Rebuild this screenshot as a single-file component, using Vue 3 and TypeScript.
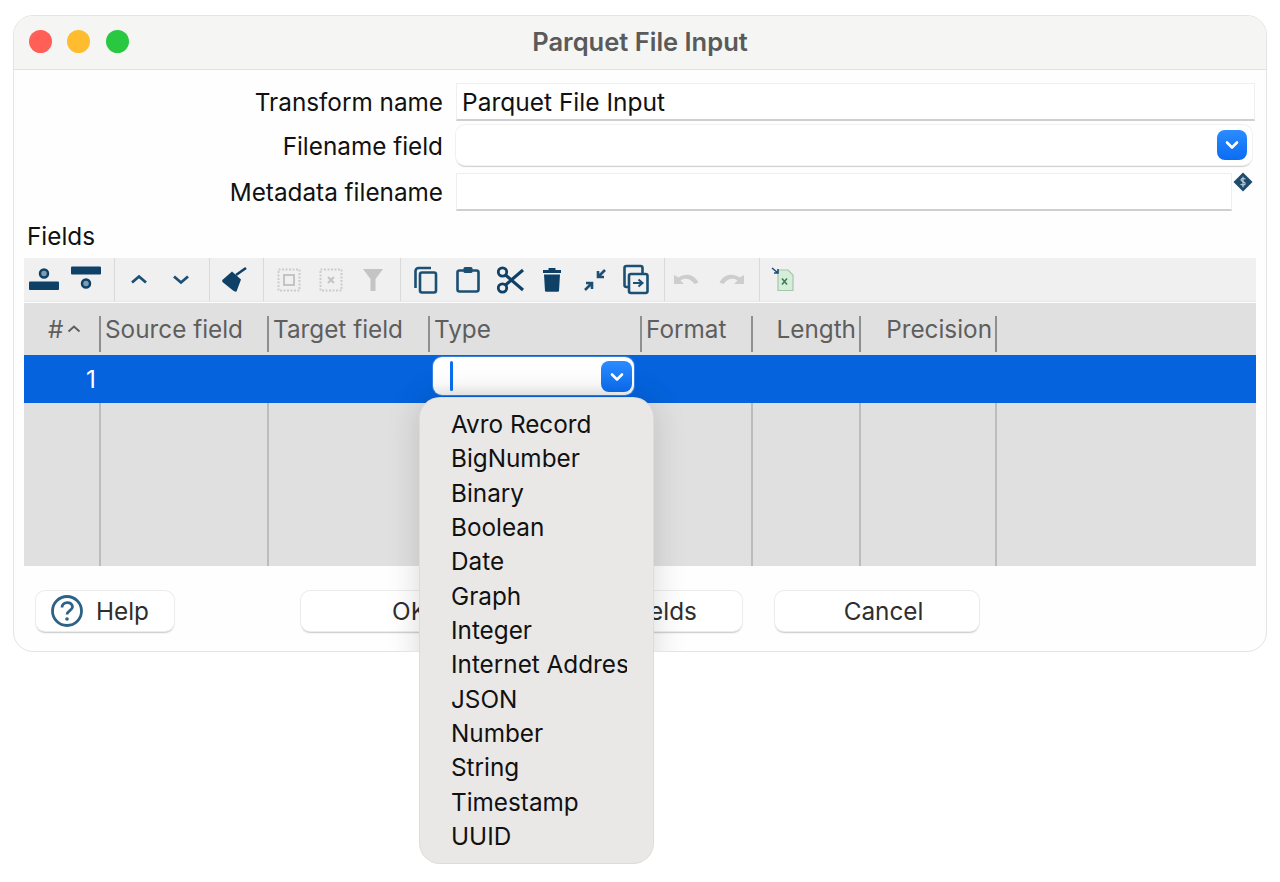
<script setup lang="ts">
const types: string[] = ['Avro Record','BigNumber','Binary','Boolean','Date','Graph','Integer','Internet Address','JSON','Number','String','Timestamp','UUID']
const cols = [
  { w: 168, t: 'Source field', c: 'l' },
  { w: 161, t: 'Target field', c: 'l' },
  { w: 212, t: 'Type', c: 'l' },
  { w: 111, t: 'Format', c: 'l' },
  { w: 108, t: 'Length', c: 'r' },
  { w: 136, t: 'Precision', c: 'r' },
]
const tpl = '77px ' + cols.map(c => c.w + 'px').join(' ') + ' 1fr'
</script>

<template>
  <div class="stage">
    <div class="window">
      <div class="titlebar">
        <div class="lights"><i class="red"></i><i class="yellow"></i><i class="green"></i></div>
        <div class="title">Parquet File Input</div>
      </div>
      <div class="form">
        <div class="row r1">
          <label>Transform name</label>
          <div class="input w1">Parquet File Input</div>
        </div>
        <div class="row r2">
          <label>Filename field</label>
          <div class="combo w2">
            <span class="dropbtn"><svg width="16" height="12" viewBox="0 0 16 12"><path d="M3 3.500l5 5 5-5" fill="none" stroke="#fff" stroke-width="2.600" stroke-linecap="round" stroke-linejoin="round"/></svg></span>
          </div>
        </div>
        <div class="row r3">
          <label>Metadata filename</label>
          <div class="input w3"></div>
          <svg class="var" width="20" height="20" viewBox="0 0 20 20"><path d="M10 0.500L19.500 10 10 19.500 0.500 10z" fill="#1d4c6e"/><path d="M12.400 7.300c-.5-.9-3.900-1.300-4.400.3-.6 2.300 4.700 1.600 4.200 4.200-.3 1.600-3.800 1.400-4.600.2M10 4.800v10.400" fill="none" stroke="#c6d5df" stroke-width="1.100"/></svg>
        </div>
        <div class="fields-label">Fields</div>
      </div>

      <div class="toolbar">
        <div class="grp g1">
          <span class="tb"><svg width="32" height="32" viewBox="0 0 32 32"><rect x="1" y="17.500" width="30" height="8.500" rx="1" fill="#0f4166"/><circle cx="16" cy="9.500" r="4" fill="#7d9db4" stroke="#0f4166" stroke-width="2.500"/></svg></span>
          <span class="tb"><svg width="32" height="32" viewBox="0 0 32 32"><rect x="1" y="2.500" width="30" height="8" rx="1" fill="#0f4166"/><circle cx="16" cy="19.500" r="4" fill="#7d9db4" stroke="#0f4166" stroke-width="2.500"/></svg></span>
        </div>
        <div class="grp">
          <span class="tb"><svg width="32" height="32" viewBox="0 0 32 32"><path d="M9 18.500l7-6 7 6" fill="none" stroke="#1c4f74" stroke-width="2.800"/></svg></span>
          <span class="tb"><svg width="32" height="32" viewBox="0 0 32 32"><path d="M9 12.500l7 6 7-6" fill="none" stroke="#1c4f74" stroke-width="2.800"/></svg></span>
        </div>
        <div class="grp g3">
          <span class="tb"><svg width="32" height="32" viewBox="0 0 32 32"><path d="M18 11L28 4" stroke="#0f4166" stroke-width="2.600" fill="none"/><path d="M14 7.500L23 15.500 18.500 27.500Q17 28 15 26.500L4.500 18Q3.500 16 5.500 15z" fill="#0f4166"/></svg></span>
        </div>
        <div class="grp g4">
          <span class="tb"><svg width="32" height="32" viewBox="0 0 32 32"><rect x="5.500" y="5.500" width="21" height="21" fill="none" stroke="#cbcbcb" stroke-width="2" stroke-dasharray="2 1.500"/><rect x="11" y="11" width="10" height="10" fill="none" stroke="#c4c4c4" stroke-width="2"/></svg></span>
          <span class="tb"><svg width="32" height="32" viewBox="0 0 32 32"><rect x="5.500" y="5.500" width="21" height="21" fill="none" stroke="#cbcbcb" stroke-width="2" stroke-dasharray="2 1.500"/><path d="M13 13l6 6M19 13l-6 6" stroke="#c4c4c4" stroke-width="2"/></svg></span>
          <span class="tb"><svg width="32" height="32" viewBox="0 0 32 32"><path d="M6 5h20l-7.500 10v12h-5V15z" fill="#c4c4c4"/></svg></span>
        </div>
        <div class="grp g5">
          <span class="tb"><svg width="32" height="32" viewBox="0 0 32 32"><path d="M21 4H8.500A3 3 0 0 0 5.500 7v17" fill="none" stroke="#1c4f74" stroke-width="2.600"/><rect x="10" y="8.500" width="16" height="20" rx="2" fill="none" stroke="#1c4f74" stroke-width="2.600"/></svg></span>
          <span class="tb"><svg width="32" height="32" viewBox="0 0 32 32"><rect x="5.500" y="6.500" width="21" height="21" rx="2" fill="none" stroke="#1c4f74" stroke-width="2.600"/><rect x="11.500" y="3" width="9" height="6" rx="1.500" fill="#1c4f74"/></svg></span>
          <span class="tb"><svg width="32" height="32" viewBox="0 0 32 32"><circle cx="8.500" cy="8" r="4.200" fill="none" stroke="#0f4166" stroke-width="2.800"/><circle cx="8.500" cy="24" r="4.200" fill="none" stroke="#0f4166" stroke-width="2.800"/><path d="M11.500 11L29 26M11.500 21L29 6" stroke="#0f4166" stroke-width="3" fill="none"/></svg></span>
          <span class="tb"><svg width="32" height="32" viewBox="0 0 32 32"><rect x="7" y="6" width="18" height="3" fill="#0f4166"/><rect x="12.500" y="4" width="7" height="2" fill="#0f4166"/><path d="M8 10.500h16l-1 16.500a1 1 0 0 1-1 .8H10a1 1 0 0 1-1-.8z" fill="#0f4166"/></svg></span>
          <span class="tb"><svg width="32" height="32" viewBox="0 0 32 32"><path d="M19 7v6h6M19 13l7-7M13 25v-6H7M13 19l-7 7" transform="translate(1 0)" fill="none" stroke="#1c4f74" stroke-width="2.600"/></svg></span>
          <span class="tb"><svg width="32" height="32" viewBox="0 0 32 32"><path d="M8.500 23H6.500a2 2 0 0 1-2-2V4a2 2 0 0 1 2-2h14a2 2 0 0 1 2 2v5" fill="none" stroke="#1c4f74" stroke-width="2.600"/><rect x="9" y="10" width="18.500" height="19" rx="2" fill="none" stroke="#1c4f74" stroke-width="2.600"/><path d="M13 19h9M18.500 15.500L22.500 19l-4 3.500" fill="none" stroke="#1c4f74" stroke-width="2"/></svg></span>
        </div>
        <div class="grp g6">
          <span class="tb"><svg width="32" height="32" viewBox="0 0 32 32"><path d="M3 11v9h10l-3.500-3.500c4-3 10-2 14 3.500l4-1.500c-4-8-13-10-20-5z" fill="#cdcdcd"/></svg></span>
          <span class="tb"><svg width="32" height="32" viewBox="0 0 32 32"><path d="M29 11v9H19l3.500-3.500c-4-3-10-2-14 3.500l-4-1.500c4-8 13-10 20-5z" fill="#cdcdcd"/></svg></span>
        </div>
        <div class="grp g7">
          <span class="tb"><svg width="32" height="32" viewBox="0 0 32 32"><path d="M10 6h10l5 5v15.500H10z" fill="#d5eeda" stroke="#a9c4ae" stroke-width="1.200"/><path d="M14 14.500l5 6M19 14.500l-5 6" stroke="#3f7d55" stroke-width="1.600"/><path d="M4 4l6 5M10 5v4H6" fill="none" stroke="#1c4f74" stroke-width="1.600"/></svg></span>
        </div>
      </div>

      <div class="table">
        <div class="head" :style="{ gridTemplateColumns: tpl }">
          <div class="hc hash"><span>#</span><svg width="14" height="10" viewBox="0 0 14 10"><path d="M1.500 7.500L7 2.500l5.500 5" fill="none" stroke="#5e5e5e" stroke-width="2"/></svg></div>
          <div v-for="c in cols" :key="c.t" class="hc" :class="c.c"><span>{{ c.t }}</span></div>
          <div></div>
        </div>
        <div class="sel" :style="{ gridTemplateColumns: tpl }">
          <div class="num">1</div>
          <div></div><div></div>
          <div class="cellcombo">
            <div class="mini">
              <i class="caret"></i>
              <span class="dropbtn small"><svg width="16" height="12" viewBox="0 0 16 12"><path d="M3 3.500l5 5 5-5" fill="none" stroke="#fff" stroke-width="2.600" stroke-linecap="round" stroke-linejoin="round"/></svg></span>
            </div>
          </div>
        </div>
        <div class="filler" :style="{ gridTemplateColumns: tpl }">
          <div class="bc"></div>
          <div v-for="c in cols" :key="c.t" class="bc"></div>
          <div></div>
        </div>
      </div>

      <div class="buttons">
        <button class="btn help">
          <svg width="34" height="34" viewBox="0 0 34 34"><circle cx="17" cy="17" r="14.500" fill="none" stroke="#2d6288" stroke-width="2.800"/><path d="M12 13.500c0-6.500 10.500-6.500 10.500-.5 0 3.500-5.500 3.800-5.500 7.500" fill="none" stroke="#2d6288" stroke-width="2.800"/><circle cx="17" cy="25" r="1.800" fill="#2d6288"/></svg>
          <span>Help</span>
        </button>
        <button class="btn wide ok">OK</button>
        <button class="btn wide gf">Get fields</button>
        <button class="btn wide cancel">Cancel</button>
      </div>
      <div class="pop-shadow"></div>
    </div>

    <div class="popup">
      <div v-for="t in types" :key="t" class="item">{{ t }}</div>
    </div>
  </div>
</template>

<style scoped>
.stage {
  position: relative;
  height: 882px;
  padding: 15px 13px 0;
  box-sizing: border-box;
  font-family: Inter, "Liberation Sans", sans-serif;
  font-size: 24.300px;
  color: #111;
  background: #fff;
  overflow: hidden;
}
.window {
  position: relative;
  height: 637px;
  box-sizing: border-box;
  border: 1px solid #e4e4e4;
  border-radius: 20px;
  background: #fefefe;
  overflow: hidden;
}
.titlebar {
  height: 53px;
  display: flex;
  align-items: center;
  justify-content: center;
  position: relative;
  background: #f5f5f3;
  border-bottom: 1px solid #e0e0e0;
}
.lights {
  position: absolute;
  left: 15px;
  top: 14px;
  display: flex;
  gap: 15.300px;
}
.lights i { width: 23px; height: 23px; border-radius: 50%; display: block; }
.red { background: #ff5f57; }
.yellow { background: #febc2e; }
.green { background: #28c840; }
.title { font-weight: 600; font-size: 25.500px; color: #5a5a5a; margin-bottom: 3px; }
.form { padding-top: 13px; }
.row { display: flex; align-items: flex-start; height: 38px; }
.row label {
  width: 429px;
  margin-right: 13px;
  text-align: right;
  flex: none;
  line-height: 38px;
  white-space: nowrap;
}
.r2 { margin-top: 4px; height: 40px; }
.r2 label { line-height: 42px; }
.r3 { margin-top: 8px; }
.input {
  height: 38px;
  box-sizing: border-box;
  line-height: 36px;
  padding-left: 5px;
  border: 1px solid #efefef;
  border-bottom: 2px solid #cfcfcf;
  background: #fff;
  font-size: 24.500px;
}
.w1 { width: 799px; }
.w3 { width: 776px; }
.var { margin: -1px 0 0 1px; filter: blur(.4px); flex: none; }
.combo {
  height: 40px;
  width: 796px;
  box-sizing: border-box;
  position: relative;
  background: #fff;
  border-radius: 9px;
  box-shadow: 0 0 0 1px #f1f1f1, 0 1.500px 1px #cfcfcf;
}
.dropbtn {
  position: absolute;
  right: 5px;
  top: 5px;
  width: 30px;
  height: 30px;
  border-radius: 8px;
  background: linear-gradient(#2b8cff, #0a6cf2);
  display: flex;
  align-items: center;
  justify-content: center;
}
.fields-label {
  margin: 12px 0 0 13px;
  height: 35px;
  line-height: 26px;
}
.toolbar {
  margin: 0 10px;
  height: 43px;
  background: #f0f0f0;
  display: flex;
  border-bottom: 1px solid #e8e8e8;
}
.grp {
  display: flex;
  padding: 0 7px 0 3px;
  border-right: 1px solid #d9d9d9;
}
.g1 { padding: 0 7px 0 0; margin-left: -1px; }
.g3 { padding-right: 8px; }
.g4 { padding: 0 6px 0 4px; }
.g5 { padding-left: 4px; }
.g6 { padding: 0 7px 0 1px; gap: 2px; }
.g7 { border-right: 0; padding-left: 3px; }
.tb {
  width: 42px;
  display: flex;
  align-items: center;
  justify-content: center;
}
.tb svg { filter: blur(.35px); }
.table {
  margin: 1px 10px 0;
  height: 263px;
  display: flex;
  flex-direction: column;
  background: #e0e0e0;
  overflow: hidden;
}
.head, .sel, .filler { display: grid; }
.head { height: 52px; flex: none; align-items: start; color: #5e5e5e; }
.hc {
  height: 36px;
  margin-top: 13px;
  border-right: 2px solid #8f8f8f;
  box-sizing: border-box;
  display: flex;
  align-items: center;
  padding: 0 3px 10px 4px;
  white-space: nowrap;
}
.hc.r { justify-content: flex-end; }
.hash { padding-left: 24px; gap: 4px; }
.sel { height: 48px; flex: none; background: #0463dd; }
.num { color: #fff; text-align: right; padding-right: 5px; line-height: 48px; }
.cellcombo { display: flex; padding: 2px 0 0 3px; }
.mini {
  position: relative;
  width: 201px;
  height: 38px;
  border-radius: 9px;
  background: linear-gradient(#fff, #fff 70%, #f2f2f2);
  box-shadow: 0 0 0 1px rgba(255,255,255,.2);
}
.caret {
  position: absolute;
  left: 17px;
  top: 4px;
  width: 3px;
  height: 30px;
  border-radius: 1.500px;
  background: #0a6ff0;
}
.dropbtn.small { right: 2px; top: 4px; width: 31px; height: 31px; }
.filler { flex: 1; }
.bc { border-right: 2px solid #bcbcbc; }
.buttons {
  display: flex;
  margin-top: 25px;
  padding-left: 22px;
}
.btn {
  height: 40px;
  border: 0;
  border-radius: 9px;
  background: #fff;
  font: inherit;
  color: #2e2e2e;
  box-shadow: 0 0 0 1px #ececec, 0 1.500px 1.500px #c8c8c8;
  display: flex;
  align-items: center;
  justify-content: center;
  padding: 0;
  flex: none;
  box-sizing: border-box;
}
.help { width: 138px; gap: 12px; justify-content: flex-start; padding-left: 14px; }
.wide { width: 204px; margin-left: 33px; }
.ok { margin-left: 127px; padding-left: 13px; }
.gf { padding-left: 4px; }
.cancel { padding-left: 13px; }
.pop-shadow {
  position: absolute;
  left: 406px;
  top: 382px;
  width: 233px;
  height: 466px;
  border-radius: 20px;
  box-shadow: 0 0 34px rgba(0,0,0,.16);
}
.popup {
  position: absolute;
  left: 420px;
  top: 398px;
  width: 233px;
  height: 465px;
  box-sizing: border-box;
  padding: 9px 0 0 31px;
  background: #e9e8e7;
  border-radius: 20px;
  box-shadow: 0 0 0 1px #dcdcdc;
}
.item {
  width: 175.500px;
  height: 34.350px;
  line-height: 34.350px;
  white-space: nowrap;
  overflow: hidden;
}
</style>

<style>
html, body { background: #fff; margin: 0; }
</style>
